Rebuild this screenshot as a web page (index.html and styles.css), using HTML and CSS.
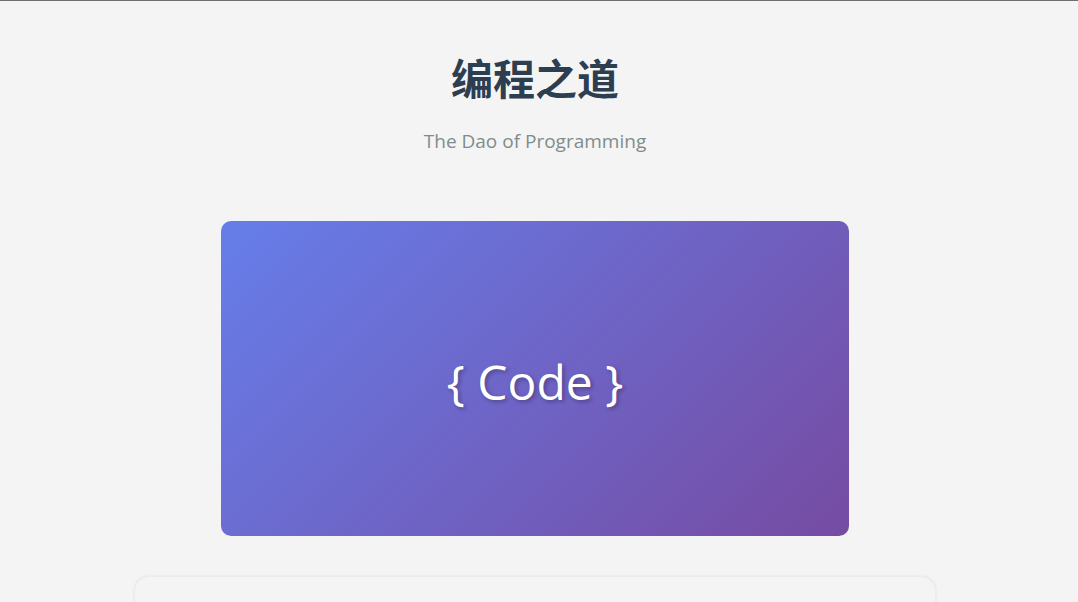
FILE: index.html
```html
<!DOCTYPE html>
<html lang="zh">
<head>
<meta charset="utf-8">
<title>编程之道</title>
<link rel="stylesheet" href="styles.css">
</head>
<body>
<div class="page">
  <header class="hero">
    <h1 class="title">编程之道</h1>
    <p class="subtitle">The Dao of Programming</p>
  </header>
  <div class="banner">
    <span class="banner-text">{ Code }</span>
  </div>
  <section class="card"></section>
</div>
</body>
</html>
```

FILE: styles.css
```css
html, body {
  margin: 0;
  padding: 0;
}
body {
  background: #f4f4f4;
  border-top: 1px solid #6f6f6f;
  font-family: "Open Sans", "Noto Sans", "Noto Sans CJK SC", sans-serif;
  padding-right: 8px;
  overflow: hidden;
}
.page {
  max-width: 800px;
  margin: 0 auto;
  display: flex;
  flex-direction: column;
  align-items: center;
}
.hero {
  text-align: center;
  padding-top: 49px;
}
.title {
  margin: 0;
  font-family: "Noto Sans CJK SC", sans-serif;
  font-size: 42px;
  font-weight: 700;
  line-height: 54px;
  color: #2c3e50;
}
.subtitle {
  margin: 25px 0 0;
  font-size: 19px;
  line-height: 24px;
  color: #7f8c8d;
}
.banner {
  margin-top: 68px;
  width: 628px;
  height: 315px;
  border-radius: 10px;
  background: linear-gradient(135deg, #667eea 0%, #764ba2 100%);
  display: flex;
  align-items: center;
  justify-content: center;
}
.banner-text {
  color: #ffffff;
  font-size: 48px;
  line-height: 1;
  padding-top: 6px;
  text-shadow: 2px 2px 4px rgba(0, 0, 0, 0.3);
}
.card {
  margin-top: 40px;
  width: 800px;
  height: 120px;
  border-radius: 15px;
  background: #f4f4f4;
  box-shadow: 0 0 3px rgba(0, 0, 0, 0.08);
  border: 1px solid #ececec;
}
```
